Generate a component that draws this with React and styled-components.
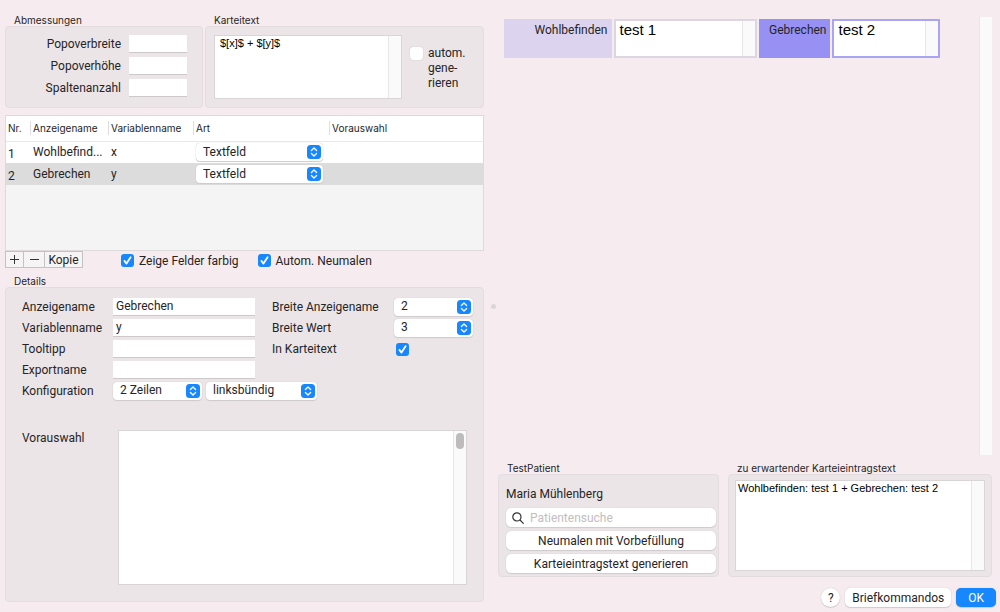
import React, { useState } from 'react';
import styled, { createGlobalStyle } from 'styled-components';

const GlobalStyle = createGlobalStyle`
    * {
        box-sizing: border-box;
    }

    body {
        margin: 0;
        background: #f6ecef;
        color: #262425;
        font: 12px/16px Roboto, "Liberation Sans", sans-serif;
    }

    input, select, textarea, button {
        margin: 0;
        color: inherit;
        font: inherit;
    }
`;

const Page = styled.main`
    display: grid;
    grid-template-columns: 484fr 12px 504fr;
    min-height: 100vh;
`;

const Left = styled.div`
    display: flex;
    flex-direction: column;
    min-width: 0;
    padding: 14px 0 10px 5px;
`;

const Right = styled.div`
    display: flex;
    flex-direction: column;
    min-width: 0;
    padding: 17px 4px 5px 2px;
`;

const Splitter = styled.div`
    display: flex;
    align-items: center;
    justify-content: flex-end;

    &:before {
        content: "";
        width: 5px;
        height: 5px;
        border-radius: 50%;
        background: #dcd6d9;
    }
`;

const Group = styled.section`
    display: flex;
    flex-direction: column;
    flex: ${props => props.$flex || 'none'};
    min-width: 0;
`;

const GroupTitle = styled.h2`
    margin: 0;
    padding: 0 9px;
    font-family: Inter, sans-serif;
    font-size: 10px;
    font-weight: 400;
    line-height: 12px;
`;

const GroupBox = styled.div`
    flex: 1;
    border: 1px solid #e3dde0;
    border-radius: 4px;
    background: #ebe5e8;
    padding: ${props => props.$pad || '8px'};
`;

const ResultBox = styled(GroupBox)`
    display: flex;
`;

const TopRow = styled.div`
    display: flex;
    gap: 2px;
`;

const SizeGrid = styled.div`
    display: grid;
    grid-template-columns: 1fr 58px;
    gap: 4px 8px;
    line-height: 18px;
    text-align: right;
`;

const Field = styled.input`
    width: 100%;
    height: 18px;
    padding: 0 3px;
    border: 0;
    border-bottom: 1px solid #cdc8ca;
    outline: 0;
    background: #fff;
`;

const TextFrame = styled.div`
    display: flex;
    flex: 1;
    min-width: 0;
    border: ${props => props.$border || '1px'} solid ${props => props.$color || '#d9d4d6'};
    background: #fff;
`;

const Area = styled.textarea`
    flex: 1;
    min-width: 0;
    padding: ${props => props.$pad || '1px 2px'};
    border: 0;
    outline: 0;
    resize: none;
    background: transparent;
    color: #000;
    font: ${props => (props.$big ? '15px/18px' : '11px/13px')} "Liberation Sans", Arial, sans-serif;
`;

const Track = styled.span`
    width: 13px;
    padding: 2px;
    border-left: 1px solid #e9e6e7;
    background: #fafafa;
`;

const Thumb = styled.span`
    display: block;
    width: 8px;
    height: 16px;
    border-radius: 4px;
    background: #bebbbc;
`;

const TextRow = styled.div`
    display: flex;
    gap: 8px;
    height: 64px;
`;

const Check = styled.label`
    display: flex;
    align-items: flex-start;
    gap: 5px;
`;

const WrappedCheck = styled(Check)`
    width: 65px;
    padding-top: 11px;
    line-height: 15px;
`;

const Tick = styled.span`
    display: grid;
    flex: none;
    width: 13px;
    height: 13px;
    margin-top: 1px;

    input, svg {
        grid-area: 1 / 1;
        width: 13px;
        height: 13px;
    }

    input {
        appearance: none;
        border-radius: 3px;
        background: #fff;
        box-shadow: 0 0 1px #aaa4a7;
    }

    input:checked {
        background: #1687fd;
        box-shadow: none;
    }

    svg {
        pointer-events: none;
        visibility: hidden;
    }

    input:checked + svg {
        visibility: visible;
    }
`;

const TableFrame = styled.div`
    height: 136px;
    margin-top: 7px;
    border: 1px solid #dedadc;
    background: #f5f4f5;
`;

const Table = styled.table`
    width: 100%;
    border-collapse: collapse;
    table-layout: fixed;

    th {
        height: 25px;
        padding: 0;
        border-bottom: 1px solid #eee6e9;
        background: #fff;
        font-family: Inter, sans-serif;
        font-size: 10px;
        font-weight: 400;
        line-height: 14px;
        text-align: left;
    }

    th span {
        display: block;
        padding-left: 2px;
        border-left: 1px solid #e2dcdf;
    }

    th:first-child span {
        border-left: 0;
    }

    td {
        height: 22px;
        padding: 0 4px 0 3px;
        white-space: nowrap;
    }

    td:first-child {
        padding: 4px 2px 0;
    }
`;

const Row = styled.tr`
    background: ${props => (props.$selected ? '#dcdcdc' : '#fff')};
`;

const Col = styled.col`
    width: ${props => props.$width}px;
`;

const SelectWrap = styled.span`
    display: grid;
    align-items: center;
    width: ${props => props.$width}px;
    height: 18px;
    border-radius: 4px;
    background: #fff;
    box-shadow: 0 0 1px #bbb3b7, 0 1px 1px #d2ccce;

    select, svg {
        grid-area: 1 / 1;
    }

    select {
        width: 100%;
        height: 18px;
        padding: 0 20px 1px 7px;
        appearance: none;
        border: 0;
        outline: 0;
        background: transparent;
    }

    svg {
        justify-self: end;
        margin-right: 2px;
        pointer-events: none;
    }
`;

const Toolbar = styled.div`
    display: flex;
    align-items: flex-start;
    height: 24px;
`;

const ToolButton = styled.button`
    display: flex;
    align-items: center;
    justify-content: center;
    width: ${props => props.$width}px;
    height: 17px;
    margin-right: -1px;
    padding: 0;
    border: 1px solid #c6c1c3;
    background: #f6f4f5;
`;

const ToolChecks = styled.div`
    display: flex;
    gap: 19px;
    padding: 2px 0 0 39px;
`;

const Details = styled(GroupBox)`
    display: flex;
    flex-direction: column;
    gap: 29px;
`;

const DetailGrid = styled.div`
    display: grid;
    grid-template-columns: 91px 142px 17px 122px 1fr;
    grid-auto-rows: 21px;
    align-items: center;

    .first {
        grid-column: 1;
    }

    .second {
        grid-column: 4;
    }
`;

const Config = styled.div`
    display: flex;
    grid-column: 2 / -1;
    gap: 4px;
`;

const CheckCell = styled.div`
    padding-left: 2px;
`;

const PresetRow = styled.div`
    display: flex;
    flex: 1;
    padding-right: 8px;

    label {
        width: 96px;
    }
`;

const Preview = styled.div`
    display: flex;
    flex: 1;
    gap: 39px;
    padding: 0 4px 0 6px;
`;

const PreviewFields = styled.div`
    display: grid;
    flex: 1;
    grid-template-columns: 3fr 4fr 2fr 3fr;
    grid-auto-rows: 39px;
    gap: 2px;
    padding-top: 2px;
`;

const PreviewLabel = styled.label`
    padding: 3px 4px;
    background: ${props => props.$color};
    text-align: right;
    white-space: nowrap;
`;

const BottomRow = styled.div`
    display: flex;
    gap: 9px;
    padding: 7px 4px 0 0;
`;

const Patient = styled(GroupBox)`
    display: flex;
    flex-direction: column;
    gap: 4px;
`;

const PatientName = styled.p`
    margin: 0;
    line-height: 20px;
`;

const Search = styled.label`
    display: flex;
    align-items: center;
    gap: 6px;
    height: 19px;
    padding: 0 6px;
    border-radius: 5px;
    background: #fff;
    box-shadow: 0 0 1px #bbb3b7, 0 1px 1px #d2ccce;

    svg {
        flex: none;
    }

    input {
        width: 100%;
        padding: 0;
        border: 0;
        outline: 0;
        background: transparent;
    }

    input::placeholder {
        color: #c3bdc0;
    }
`;

const Button = styled.button`
    height: 19px;
    padding: 0 ${props => props.$pad || 7}px;
    border: 0;
    border-radius: 5px;
    background: ${props => (props.$primary ? '#1687fd' : '#fff')};
    box-shadow: 0 0 1px #bbb3b7, 0 1px 1px #d2ccce;
    color: ${props => (props.$primary ? '#fff' : 'inherit')};
    white-space: nowrap;
`;

const HelpButton = styled(Button)`
    width: 19px;
    padding: 0;
    border-radius: 50%;
`;

const Footer = styled.footer`
    display: flex;
    justify-content: flex-end;
    gap: 5px;
    padding-top: 11px;
`;

const Checkbox = ({ id, checked = false }) => (
    <Tick>
        <input type="checkbox" id={id} defaultChecked={checked} />
        <svg viewBox="0 0 13 13" fill="none" stroke="#fff" strokeWidth="1.8" strokeLinecap="round" strokeLinejoin="round">
            <path d="M3.4 6.9 5.5 9.6 9.6 3.3" />
        </svg>
    </Tick>
);

const Dropdown = ({ width, options, ...rest }) => (
    <SelectWrap $width={width}>
        <select {...rest}>
            {options.map(option => <option key={option}>{option}</option>)}
        </select>
        <svg width="14" height="14" viewBox="0 0 14 14" fill="none">
            <rect width="14" height="14" rx="3.5" fill="#1687fd" />
            <path d="M4.4 5.5 7 3 9.6 5.5M4.4 8.5 7 11 9.6 8.5" stroke="#fff" strokeWidth="1.3" strokeLinecap="round" strokeLinejoin="round" />
        </svg>
    </SelectWrap>
);

const fields = [
    { nr: 1, name: 'Wohlbefind...', variable: 'x' },
    { nr: 2, name: 'Gebrechen', variable: 'y' },
];

const App = () => {
    const [selected, setSelected] = useState(2);

    return (
        <>
            <GlobalStyle />
            <Page>
                <Left>
                    <TopRow>
                        <Group $flex="198">
                            <GroupTitle>Abmessungen</GroupTitle>
                            <GroupBox $pad="8px 15px 9px">
                                <SizeGrid>
                                    <label htmlFor="popWidth">Popoverbreite</label>
                                    <Field id="popWidth" />
                                    <label htmlFor="popHeight">Popoverhöhe</label>
                                    <Field id="popHeight" />
                                    <label htmlFor="columns">Spaltenanzahl</label>
                                    <Field id="columns" />
                                </SizeGrid>
                            </GroupBox>
                        </Group>
                        <Group $flex="279">
                            <GroupTitle>Karteitext</GroupTitle>
                            <GroupBox>
                                <TextRow>
                                    <TextFrame>
                                        <Area aria-label="Karteitext" $pad="1px 5px" defaultValue="$[x]$ + $[y]$" />
                                        <Track />
                                    </TextFrame>
                                    <WrappedCheck>
                                        <Checkbox />
                                        <span>autom.<br />gene-<br />rieren</span>
                                    </WrappedCheck>
                                </TextRow>
                            </GroupBox>
                        </Group>
                    </TopRow>

                    <TableFrame>
                        <Table>
                            <colgroup>
                                <Col $width={24} />
                                <Col $width={78} />
                                <Col $width={85} />
                                <Col $width={136} />
                                <col />
                            </colgroup>
                            <thead>
                                <tr>
                                    <th><span>Nr.</span></th>
                                    <th><span>Anzeigename</span></th>
                                    <th><span>Variablenname</span></th>
                                    <th><span>Art</span></th>
                                    <th><span>Vorauswahl</span></th>
                                </tr>
                            </thead>
                            <tbody>
                                {fields.map(field => (
                                    <Row key={field.nr} $selected={field.nr === selected} onClick={() => setSelected(field.nr)}>
                                        <td>{field.nr}</td>
                                        <td>{field.name}</td>
                                        <td>{field.variable}</td>
                                        <td><Dropdown width={127} options={['Textfeld']} aria-label={`Art ${field.nr}`} /></td>
                                        <td />
                                    </Row>
                                ))}
                            </tbody>
                        </Table>
                    </TableFrame>

                    <Toolbar>
                        <ToolButton $width={19} aria-label="Neu">
                            <svg width="11" height="11" viewBox="0 0 11 11" stroke="#333"><path d="M1 5.5h9M5.5 1v9" /></svg>
                        </ToolButton>
                        <ToolButton $width={22} aria-label="Entfernen">
                            <svg width="11" height="11" viewBox="0 0 11 11" stroke="#333"><path d="M1 5.5h9" /></svg>
                        </ToolButton>
                        <ToolButton $width={39}>Kopie</ToolButton>
                        <ToolChecks>
                            <Check><Checkbox checked />Zeige Felder farbig</Check>
                            <Check><Checkbox checked />Autom. Neumalen</Check>
                        </ToolChecks>
                    </Toolbar>

                    <Group $flex="1">
                        <GroupTitle>Details</GroupTitle>
                        <Details $pad="8px 8px 16px 16px">
                            <DetailGrid>
                                <label htmlFor="name">Anzeigename</label>
                                <Field id="name" defaultValue="Gebrechen" />
                                <label className="second" htmlFor="nameWidth">Breite Anzeigename</label>
                                <Dropdown id="nameWidth" width={79} options={['2']} />
                                <label htmlFor="variable">Variablenname</label>
                                <Field id="variable" defaultValue="y" />
                                <label className="second" htmlFor="valueWidth">Breite Wert</label>
                                <Dropdown id="valueWidth" width={79} options={['3']} />
                                <label htmlFor="tooltip">Tooltipp</label>
                                <Field id="tooltip" />
                                <label className="second" htmlFor="inText">In Karteitext</label>
                                <CheckCell><Checkbox id="inText" checked /></CheckCell>
                                <label htmlFor="exportName">Exportname</label>
                                <Field id="exportName" />
                                <label className="first" htmlFor="lines">Konfiguration</label>
                                <Config>
                                    <Dropdown id="lines" width={89} options={['2 Zeilen']} />
                                    <Dropdown aria-label="Ausrichtung" width={111} options={['linksbündig']} />
                                </Config>
                            </DetailGrid>
                            <PresetRow>
                                <label htmlFor="preset">Vorauswahl</label>
                                <TextFrame>
                                    <Area id="preset" />
                                    <Track><Thumb /></Track>
                                </TextFrame>
                            </PresetRow>
                        </Details>
                    </Group>
                </Left>

                <Splitter />

                <Right>
                    <Preview>
                        <PreviewFields>
                            <PreviewLabel htmlFor="test1" $color="#dcd4ee">Wohlbefinden</PreviewLabel>
                            <TextFrame $border="2px" $color="#dbd6e2">
                                <Area id="test1" $big $pad="0 4px" defaultValue="test 1" />
                                <Track />
                            </TextFrame>
                            <PreviewLabel htmlFor="test2" $color="#9691f3">Gebrechen</PreviewLabel>
                            <TextFrame $border="2px" $color="#a9a5f2">
                                <Area id="test2" $big $pad="0 4px" defaultValue="test 2" />
                                <Track />
                            </TextFrame>
                        </PreviewFields>
                        <Track />
                    </Preview>

                    <BottomRow>
                        <Group $flex="221">
                            <GroupTitle>TestPatient</GroupTitle>
                            <Patient $pad="9px 2px 3px 7px">
                                <PatientName>Maria Mühlenberg</PatientName>
                                <Search>
                                    <svg width="12" height="12" viewBox="0 0 12 12" fill="none" stroke="#333" strokeWidth="1.2" strokeLinecap="round">
                                        <circle cx="4.9" cy="4.9" r="4.1" />
                                        <path d="M8 8 11.3 11.3" />
                                    </svg>
                                    <input type="text" placeholder="Patientensuche" aria-label="Patientensuche" />
                                </Search>
                                <Button>Neumalen mit Vorbefüllung</Button>
                                <Button>Karteieintragstext generieren</Button>
                            </Patient>
                        </Group>
                        <Group $flex="264">
                            <GroupTitle>zu erwartender Karteieintragstext</GroupTitle>
                            <ResultBox $pad="5px 6px">
                                <TextFrame>
                                    <Area aria-label="zu erwartender Karteieintragstext" readOnly value="Wohlbefinden: test 1 + Gebrechen: test 2" />
                                    <Track />
                                </TextFrame>
                            </ResultBox>
                        </Group>
                    </BottomRow>

                    <Footer>
                        <HelpButton aria-label="Hilfe">?</HelpButton>
                        <Button>Briefkommandos</Button>
                        <Button $primary $pad={12}>OK</Button>
                    </Footer>
                </Right>
            </Page>
        </>
    );
};

export default App;
